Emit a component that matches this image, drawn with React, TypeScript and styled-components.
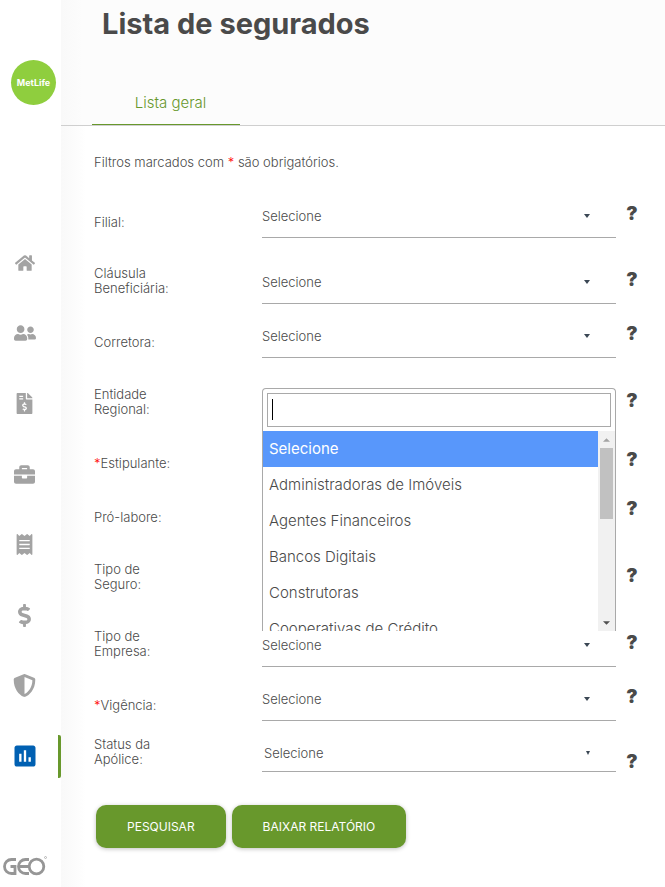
import React, { useState } from 'react';
import styled, { createGlobalStyle, css } from 'styled-components';
import {
  FaHome,
  FaUserFriends,
  FaFileInvoiceDollar,
  FaBriefcase,
  FaReceipt,
  FaDollarSign,
  FaShieldAlt,
} from 'react-icons/fa';
import { MdAssessment } from 'react-icons/md';
import type { IconType } from 'react-icons';

const GlobalStyle = createGlobalStyle`
  *, *::before, *::after { box-sizing: border-box; }
  body {
    margin: 0;
    background: #fff;
    color: #4a4a4a;
    font-family: Inter, 'Open Sans', sans-serif;
    font-weight: 300;
  }
`;

const Page = styled.div`
  display: grid;
  grid-template-columns: 61px 1fr;
  min-height: 100vh;
`;

const Sidebar = styled.aside`
  display: flex;
  flex-direction: column;
  padding-top: 60px;
  background: #fff;
`;

const Brand = styled.a`
  display: grid;
  place-items: center;
  width: 45px;
  height: 45px;
  margin-left: 11px;
  border-radius: 50%;
  background: #8fce3e;
  color: #fff;
  font-size: 9px;
  font-weight: 700;
  text-decoration: none;
`;

const Nav = styled.nav`
  display: grid;
  grid-auto-rows: 43px;
  align-content: space-between;
  height: 537px;
  margin-top: 136px;
`;

const NavLink = styled.a<{ $active?: boolean; $size: number }>`
  display: grid;
  place-items: center;
  padding-right: 9px;
  border-right: 3px solid transparent;
  color: #a3a3a3;
  font-size: ${({ $size }) => $size}px;
  ${({ $active }) =>
    $active &&
    css`
      color: #0060b2;
      border-radius: 2px;
      border-right-color: #68982c;
    `}
  svg {
    display: block;
  }
`;

const GeoLogo = styled.svg`
  width: 45px;
  height: 22px;
  margin: auto 0 10px 2px;
`;

const Content = styled.main`
  min-width: 0;
  background: linear-gradient(to right, #f9f9f9, #fefefe 22px, #fff 24px);
`;

const Header = styled.header`
  padding: 6px 31px 0;
  border-bottom: 1px solid #cfcfcf;
  background: linear-gradient(to right, #f9f9f9, #fcfcfc 22px);
`;

const Title = styled.h1`
  margin: 0 0 41px 10px;
  font-size: 29px;
  font-weight: 700;
  line-height: 36px;
`;

const TabButton = styled.button`
  display: block;
  width: 148px;
  height: 42px;
  padding: 0 0 3px 9px;
  border: 0;
  border-bottom: 1px solid #68982c;
  background: none;
  color: #68982c;
  font: inherit;
  font-size: 15px;
`;

const Form = styled.form`
  padding: 28px 0 39px 33px;
`;

const Hint = styled.p`
  margin: 0 0 14px;
  font-size: 13px;
  line-height: 16px;
`;

const Asterisk = styled.span`
  color: #f00;
`;

const Row = styled.div<{ $compact?: boolean; $tall?: boolean }>`
  display: grid;
  grid-template-columns: 168px 1fr 49px;
  align-items: end;
  min-height: ${({ $compact, $tall }) => ($compact ? 51 : $tall ? 67 : 54)}px;
`;

const Label = styled.label<{ $compact?: boolean }>`
  max-width: 80px;
  padding: ${({ $compact }) => ($compact ? '16px 0 5px' : '28px 0 8px')};
  font-size: 13px;
  line-height: 15px;
`;

const Field = styled.div<{ $compact?: boolean }>`
  position: relative;
  height: ${({ $compact }) => ($compact ? 30 : 36)}px;
`;

const Select = styled.select<{ $compact?: boolean }>`
  width: 100%;
  height: 100%;
  padding: ${({ $compact }) => ($compact ? '0 30px 7px 2px' : '0 30px 7px 0')};
  border: 0;
  border-bottom: 1px solid #a9a9a9;
  border-radius: 0;
  outline: 0;
  appearance: none;
  background: transparent;
  color: inherit;
  font: inherit;
  font-size: 13px;
`;

const Caret = styled.svg<{ $compact?: boolean }>`
  position: absolute;
  top: ${({ $compact }) => ($compact ? 9 : 12)}px;
  right: 26px;
  width: ${({ $compact }) => ($compact ? 4 : 6)}px;
  height: 4px;
  fill: #3b4754;
  pointer-events: none;
`;

const Help = styled.button<{ $gap: number }>`
  justify-self: start;
  width: 20px;
  height: 20px;
  margin: 0 0 ${({ $gap }) => $gap}px 6px;
  padding: 0;
  border: 0;
  background: none;
  color: #4a4a4a;
  font: inherit;
  font-size: 19px;
  font-weight: 900;
  line-height: 20px;
`;

const Popup = styled.div`
  position: absolute;
  z-index: 2;
  top: -1px;
  left: 0;
  right: 0;
  height: 243px;
  overflow: hidden;
  border: 1px solid #a9a9a9;
  border-bottom: 0;
  border-radius: 4px 4px 0 0;
  background: #fff;
`;

const SearchBox = styled.div`
  position: relative;
  padding: 4px;
`;

const Search = styled.input`
  display: block;
  width: 100%;
  height: 34px;
  padding: 4px;
  border: 1px solid #a9a9a9;
  border-radius: 0;
  outline: 0;
  font: inherit;
  font-size: 16px;
`;

const TextCursor = styled.span`
  position: absolute;
  top: 10px;
  left: 9px;
  width: 1px;
  height: 21px;
  background: #000;
`;

const Results = styled.div`
  display: grid;
  grid-template-columns: 1fr 17px;
  height: 200px;
`;

const Options = styled.ul`
  margin: 0;
  padding: 0;
  overflow: hidden;
  list-style: none;
`;

const Option = styled.li<{ $selected: boolean }>`
  padding: 6px;
  background: ${({ $selected }) => ($selected ? '#5897fb' : '#fff')};
  color: ${({ $selected }) => ($selected ? '#fff' : 'inherit')};
  font-size: 15px;
  font-weight: ${({ $selected }) => ($selected ? 400 : 300)};
  line-height: 24px;
`;

const Scrollbar = styled.div`
  display: grid;
  grid-template-rows: 17px 71px 1fr 17px;
  justify-items: center;
  align-items: center;
  background: #f1f1f1;
`;

const Thumb = styled.div`
  grid-row: 2;
  width: 13px;
  height: 100%;
  background: #c1c1c1;
`;

const ScrollArrow = styled.svg<{ $down?: boolean }>`
  grid-row: ${({ $down }) => ($down ? 4 : 1)};
  width: 7px;
  height: 4px;
  fill: ${({ $down }) => ($down ? '#505050' : '#a3a3a3')};
`;

const Actions = styled.div`
  display: flex;
  gap: 6px;
  margin: 33px 0 0 2px;
`;

const ActionButton = styled.button`
  height: 43px;
  padding: 0 31px 1px;
  border: 0;
  border-radius: 10px;
  background: #68982c;
  box-shadow: 0 1px 4px rgba(0, 0, 0, 0.25);
  color: #fff;
  font: inherit;
  font-size: 12px;
  font-weight: 400;
`;

type NavItem = { icon: IconType; label: string; size: number; active?: boolean };

const navItems: NavItem[] = [
  { icon: FaHome, label: 'Início', size: 20 },
  { icon: FaUserFriends, label: 'Segurados', size: 22 },
  { icon: FaFileInvoiceDollar, label: 'Faturas', size: 21 },
  { icon: FaBriefcase, label: 'Apólices', size: 21 },
  { icon: FaReceipt, label: 'Recibos', size: 21 },
  { icon: FaDollarSign, label: 'Financeiro', size: 23 },
  { icon: FaShieldAlt, label: 'Coberturas', size: 23 },
  { icon: MdAssessment, label: 'Relatórios', size: 28, active: true },
];

type Filter = {
  id: string;
  label: string;
  required?: boolean;
  open?: boolean;
  compact?: boolean;
  tall?: boolean;
  helpGap?: number;
};

const filters: Filter[] = [
  { id: 'filial', label: 'Filial:' },
  { id: 'clausula', label: 'Cláusula Beneficiária:' },
  { id: 'corretora', label: 'Corretora:' },
  { id: 'entidade', label: 'Entidade Regional:', open: true, tall: true },
  { id: 'estipulante', label: 'Estipulante:', required: true, helpGap: 9 },
  { id: 'prolabore', label: 'Pró-labore:' },
  { id: 'seguro', label: 'Tipo de Seguro:', tall: true },
  { id: 'empresa', label: 'Tipo de Empresa:', tall: true },
  { id: 'vigencia', label: 'Vigência:', required: true },
  { id: 'status', label: 'Status da Apólice:', compact: true, helpGap: 0 },
];

const companyTypes = [
  'Selecione',
  'Administradoras de Imóveis',
  'Agentes Financeiros',
  'Bancos Digitais',
  'Construtoras',
  'Cooperativas de Crédito',
];

function SearchPopup({ id }: { id: string }) {
  const [query, setQuery] = useState('');
  const [selected, setSelected] = useState(companyTypes[0]);
  const visible = companyTypes.filter((t) => t.toLowerCase().includes(query.toLowerCase()));
  return (
    <Popup>
      <SearchBox>
        <Search id={id} value={query} onChange={(e) => setQuery(e.target.value)} />
        {query === '' && <TextCursor />}
      </SearchBox>
      <Results>
        <Options role="listbox" aria-label="Opções">
          {visible.map((t) => (
            <Option
              key={t}
              role="option"
              aria-selected={t === selected}
              $selected={t === selected}
              onClick={() => setSelected(t)}
            >
              {t}
            </Option>
          ))}
        </Options>
        <Scrollbar aria-hidden="true">
          <ScrollArrow viewBox="0 0 8 4">
            <path d="M0 4 4 0 8 4z" />
          </ScrollArrow>
          <Thumb />
          <ScrollArrow $down viewBox="0 0 8 4">
            <path d="M0 0h8L4 4z" />
          </ScrollArrow>
        </Scrollbar>
      </Results>
    </Popup>
  );
}

function FilterRow({ id, label, required, open, compact, tall, helpGap = 14 }: Filter) {
  return (
    <Row $compact={compact} $tall={tall}>
      <Label htmlFor={id} $compact={compact}>
        {required && <Asterisk>*</Asterisk>}
        {label}
      </Label>
      <Field $compact={compact}>
        {open ? (
          <SearchPopup id={id} />
        ) : (
          <>
            <Select id={id} $compact={compact}>
              <option>Selecione</option>
            </Select>
            <Caret $compact={compact} viewBox="0 0 6 4" preserveAspectRatio="none" aria-hidden="true">
              <path d="M0 0h6L3 4z" />
            </Caret>
          </>
        )}
      </Field>
      <Help type="button" $gap={helpGap} aria-label={`Ajuda: ${label}`}>
        ?
      </Help>
    </Row>
  );
}

export default function App() {
  return (
    <>
      <GlobalStyle />
      <Page>
        <Sidebar>
          <Brand href="#">MetLife</Brand>
          <Nav aria-label="Principal">
            {navItems.map(({ icon: Icon, label, size, active }) => (
              <NavLink key={label} href="#" aria-label={label} $size={size} $active={active}>
                <Icon />
              </NavLink>
            ))}
          </Nav>
          <GeoLogo viewBox="0 0 45 22" role="img" aria-label="GEO" fill="none" stroke="#969696" strokeWidth="2.8">
            <path d="M14 4.500H9.500a7 7 0 0 0 0 14H13V11.500H8.500" />
            <path d="M27 4.500H23.500a7 7 0 0 0 0 14H27M17 11.500h10" />
            <circle cx="34.500" cy="11.500" r="7.300" />
            <circle cx="43.500" cy="2.500" r="1" strokeWidth="0.600" />
          </GeoLogo>
        </Sidebar>
        <Content>
          <Header>
            <Title>Lista de segurados</Title>
            <TabButton type="button">Lista geral</TabButton>
          </Header>
          <Form onSubmit={(e) => e.preventDefault()}>
            <Hint>
              Filtros marcados com <Asterisk>*</Asterisk> são obrigatórios.
            </Hint>
            {filters.map((f) => (
              <FilterRow key={f.id} {...f} />
            ))}
            <Actions>
              <ActionButton type="submit">PESQUISAR</ActionButton>
              <ActionButton type="button">BAIXAR RELATÓRIO</ActionButton>
            </Actions>
          </Form>
        </Content>
      </Page>
    </>
  );
}
